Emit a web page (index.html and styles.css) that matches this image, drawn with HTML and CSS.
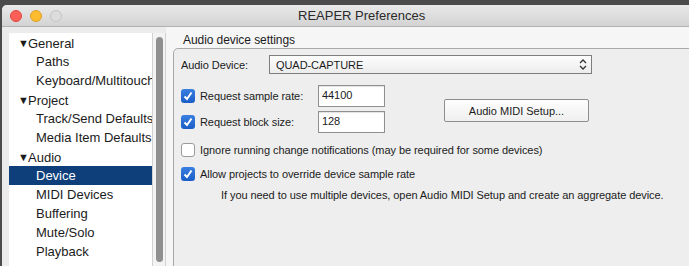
FILE: index.html
```html
<!DOCTYPE html>
<html lang="en">
<head>
  <meta charset="UTF-8">
  <title>REAPER Preferences</title>
  <link rel="stylesheet" href="styles.css">
</head>
<body>
  <div class="window">
    <!-- Title bar -->
    <header class="titlebar">
      <div class="lights">
        <span class="light light-close"></span>
        <span class="light light-min"></span>
        <span class="light light-zoom"></span>
      </div>
      <div class="title">REAPER Preferences</div>
    </header>

    <div class="main">
      <!-- Category tree -->
      <aside class="sidebar">
        <ul class="tree">
          <li class="node"><span class="twisty">&#9660;</span>General</li>
          <li class="leaf">Paths</li>
          <li class="leaf">Keyboard/Multitouch</li>
          <li class="node"><span class="twisty">&#9660;</span>Project</li>
          <li class="leaf">Track/Send Defaults</li>
          <li class="leaf">Media Item Defaults</li>
          <li class="node"><span class="twisty">&#9660;</span>Audio</li>
          <li class="leaf selected">Device</li>
          <li class="leaf">MIDI Devices</li>
          <li class="leaf">Buffering</li>
          <li class="leaf">Mute/Solo</li>
          <li class="leaf">Playback</li>
        </ul>
        <div class="scroll">
          <div class="thumb"></div>
        </div>
      </aside>

      <!-- Settings pane -->
      <section class="pane">
        <div class="caption">Audio device settings</div>
        <div class="groupbox">
          <div class="device-row">
            <label class="device-label">Audio Device:</label>
            <div class="popup">
              <span>QUAD-CAPTURE</span>
              <svg class="popup-arrows" width="8" height="13" viewBox="0 0 8 13">
                <path d="M1 5 L4 2 L7 5" fill="none" stroke="#333" stroke-width="1.3"/>
                <path d="M1 8 L4 11 L7 8" fill="none" stroke="#333" stroke-width="1.3"/>
              </svg>
            </div>
          </div>

          <div class="request-block">
            <div class="request-rows">
              <div class="request-row">
                <span class="check checked">
                  <svg width="14" height="14" viewBox="0 0 14 14"><path d="M3.5 7.5 L6 10 L10.5 3.5" fill="none" stroke="#fff" stroke-width="2"/></svg>
                </span>
                <span class="request-label">Request sample rate:</span>
                <div class="field">44100</div>
              </div>
              <div class="request-row">
                <span class="check checked">
                  <svg width="14" height="14" viewBox="0 0 14 14"><path d="M3.5 7.5 L6 10 L10.5 3.5" fill="none" stroke="#fff" stroke-width="2"/></svg>
                </span>
                <span class="request-label">Request block size:</span>
                <div class="field">128</div>
              </div>
            </div>
            <button class="push">Audio MIDI Setup...</button>
          </div>

          <div class="option-row">
            <span class="check"></span>
            <span>Ignore running change notifications (may be required for some devices)</span>
          </div>
          <div class="option-row">
            <span class="check checked">
              <svg width="14" height="14" viewBox="0 0 14 14"><path d="M3.5 7.5 L6 10 L10.5 3.5" fill="none" stroke="#fff" stroke-width="2"/></svg>
            </span>
            <span>Allow projects to override device sample rate</span>
          </div>

          <p class="hint">If you need to use multiple devices, open Audio MIDI Setup and create an aggregate device.</p>
        </div>
      </section>
    </div>
  </div>
</body>
</html>
```

FILE: styles.css
```css
/* Base */
:root {
  --text-color: #1b1b1b;
  --window-bg: #ececec;
  --pane-bg: #f6f6f6;
  --group-bg: #eeeeee;
  --group-border: #a9a9a9;
  --select-color: #0f3f7b;
  --font-family: 'Liberation Sans', Arial, sans-serif;
}
* {
  box-sizing: border-box;
}
body {
  margin: 0;
  width: 689px;
  height: 266px;
  overflow: hidden;
  background-color: #4b4b4b;
  font-family: var(--font-family);
  color: var(--text-color);
}
.window {
  margin: 5px 0 0 2px;
  height: 261px;
  background-color: var(--window-bg);
  border-radius: 5px 0 0 0;
  overflow: hidden;
  display: flex;
  flex-direction: column;
}
/* Title bar */
.titlebar {
  height: 22px;
  flex: none;
  display: flex;
  align-items: center;
  background: linear-gradient(#e9e9e9, #d3d3d3);
  border-bottom: 1px solid #b1b1b1;
}
.lights {
  display: flex;
  gap: 8px;
  margin-left: 8px;
}
.light {
  width: 12px;
  height: 12px;
  border-radius: 50%;
}
.light-close {
  background-color: #fc5f57;
  border: 1px solid #df4740;
}
.light-min {
  background-color: #fdbc2e;
  border: 1px solid #dea024;
}
.light-zoom {
  background-color: #dcdcdc;
  border: 1px solid #c3c3c3;
}
.title {
  margin-left: 236px;
  font-size: 13px;
  color: #2a2a2a;
}
/* Main area */
.main {
  flex: 1;
  display: flex;
  min-height: 0;
}
.sidebar {
  width: 164px;
  flex: none;
  display: flex;
  padding: 6px 0 0 7px;
}
.tree {
  list-style: none;
  margin: 0;
  padding: 0;
  width: 143px;
  background-color: #fff;
  font-size: 13px;
  white-space: nowrap;
  overflow: hidden;
}
.tree li {
  height: 19px;
  line-height: 20px;
}
.tree .node {
  padding-left: 9px;
}
.twisty {
  display: inline-block;
  width: 10px;
  font-size: 11px;
  vertical-align: 1px;
}
.tree .leaf {
  padding-left: 27px;
}
.tree .selected {
  background-color: var(--select-color);
  color: #fff;
}
.scroll {
  width: 14px;
  border-left: 1px solid #d2d2d2;
  border-right: 1px solid #d2d2d2;
  background-color: #f3f3f3;
  padding: 4px 0 0 3px;
}
.thumb {
  width: 7px;
  height: 225px;
  border-radius: 4px;
  background-color: #8f8f8f;
}
/* Settings pane */
.pane {
  flex: 1;
  background-color: var(--pane-bg);
  padding: 6px 0 0 7px;
  font-size: 11px;
  letter-spacing: -0.07px;
}
.caption {
  margin-left: 10px;
  height: 15px;
  line-height: 14px;
  font-size: 12px;
}
.groupbox {
  margin-right: -10px;
  height: 230px;
  background-color: var(--group-bg);
  border: 1px solid var(--group-border);
  border-radius: 5px 0 0 0;
  padding: 6px 0 0 7px;
}
.device-row {
  display: flex;
  align-items: center;
}
.device-label {
  width: 88px;
}
.popup {
  width: 323px;
  height: 19px;
  display: flex;
  align-items: center;
  justify-content: space-between;
  padding: 0 4px 0 6px;
  border: 1px solid #7e7e7e;
  background: linear-gradient(#fdfdfd, #ececec);
}
.popup-arrows {
  display: block;
}
.request-block {
  display: flex;
  margin-top: 11px;
}
.request-rows {
  display: flex;
  flex-direction: column;
  gap: 4px;
}
.request-row {
  display: flex;
  align-items: center;
  height: 22px;
}
.request-label {
  width: 118px;
}
.field {
  width: 67px;
  height: 22px;
  background-color: #fff;
  border: 1px solid #8f8f8f;
  box-shadow: inset 0 1px 1px rgba(0,0,0,0.12);
  padding: 3px 0 0 3px;
}
.push {
  margin: 14px 0 0 59px;
  width: 145px;
  height: 23px;
  font-family: var(--font-family);
  font-size: 11px;
  color: var(--text-color);
  background: linear-gradient(#fefefe, #efefef);
  border: 1px solid #8e8e8e;
  border-radius: 2px;
  padding: 0;
}
.check {
  width: 14px;
  height: 14px;
  flex: none;
  border-radius: 3px;
  background-color: #fff;
  border: 1px solid #9b9b9b;
  margin-right: 5px;
}
.check.checked {
  background: linear-gradient(#3a7fe0, #1a5dc8);
  border: none;
}
.check svg {
  display: block;
}
.option-row {
  display: flex;
  align-items: center;
  height: 14px;
  margin-top: 10px;
}
.hint {
  margin: 7px 0 0;
  padding-left: 40px;
  line-height: 15px;
}
```
